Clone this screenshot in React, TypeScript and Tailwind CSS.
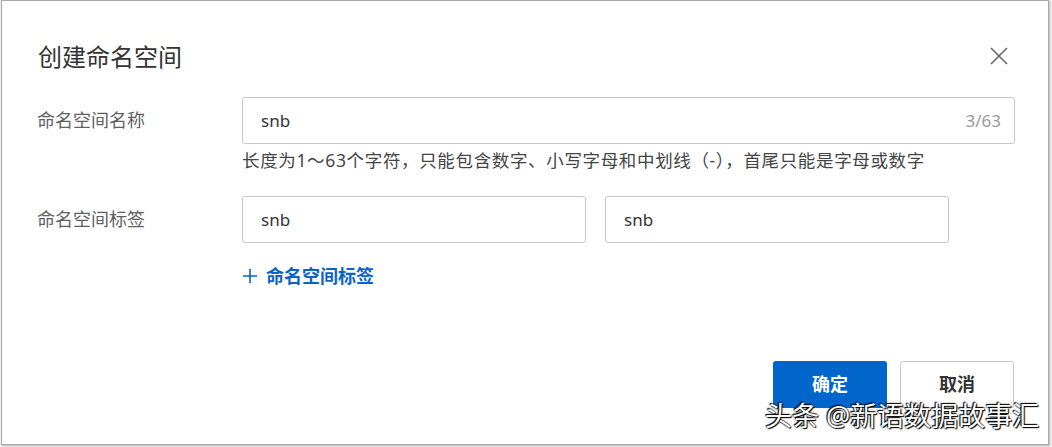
import React from "react"

const FONT = "font-['Noto_Sans','Noto_Sans_CJK_SC',sans-serif]"

function CloseIcon() {
  return (
    <svg width="20" height="20" viewBox="0 0 20 20" fill="none" stroke="#666666" strokeWidth="1.6">
      <path d="M2 2 L18 18 M18 2 L2 18" />
    </svg>
  )
}

function TextBox({ value, counter, className }: { value: string; counter?: string; className?: string }) {
  return (
    <div
      className={`flex h-[47px] items-center justify-between rounded-[3px] border border-[#c9c9c9] bg-white pl-[18px] pr-[13px] text-[17px] text-[#333333] ${className ?? ""}`}
    >
      <span>{value}</span>
      {counter && <span className="text-[17px] text-[#9a9a9a]">{counter}</span>}
    </div>
  )
}

export default function App() {
  return (
    <div className={`relative h-[447px] w-[1052px] overflow-hidden bg-[#f2f2f2] ${FONT}`}>
      <div className="ml-[1px] flex h-[445px] w-[1048px] flex-col border border-[#a9a9a9] bg-white shadow-[1px_1px_2px_rgba(0,0,0,0.25)]">
        {/* header */}
        <div className="mt-[39px] flex h-[34px] items-center justify-between pl-[36px] pr-[37px]">
          <h2 className="text-[24px] leading-[34px] text-[#333333]">创建命名空间</h2>
          <button className="-mt-[3px] mr-[2px]">
            <CloseIcon />
          </button>
        </div>

        {/* form */}
        <div className="mt-[23px] pl-[35px] pr-[33px]">
          <div className="flex items-center">
            <label className="w-[205px] shrink-0 text-[18px] text-[#5f5f5f]">命名空间名称</label>
            <TextBox value="snb" counter="3/63" className="flex-1" />
          </div>
          <p className="ml-[205px] mt-[4px] text-[17.5px] leading-[24px] tracking-[0.65px] text-[#444444]">
            长度为1～63个字符，只能包含数字、小写字母和中划线（-），首尾只能是字母或数字
          </p>

          <div className="mt-[24px] flex items-center">
            <label className="w-[205px] shrink-0 text-[18px] text-[#5f5f5f]">命名空间标签</label>
            <div className="flex gap-[19px]">
              <TextBox value="snb" className="w-[344px]" />
              <TextBox value="snb" className="w-[344px]" />
            </div>
          </div>

          <button className="ml-[205px] mt-[21px] flex items-center gap-[8px] text-[18px] font-bold leading-[24px] text-[#0a64c8]">
            <svg width="16" height="16" viewBox="0 0 16 16" stroke="#0a64c8" strokeWidth="1.6">
              <path d="M8 1 V15 M1 8 H15" />
            </svg>
            命名空间标签
          </button>
        </div>

        {/* footer */}
        <div className="mt-[73px] flex justify-end gap-[13px] pr-[34px]">
          <button className="h-[47px] w-[114px] rounded-[3px] bg-[#0066cc] text-[18px] font-bold text-white">
            确定
          </button>
          <button className="h-[47px] w-[114px] rounded-[3px] border border-[#c9c9c9] bg-white text-[18px] font-bold text-[#333333]">
            取消
          </button>
        </div>
      </div>

      {/* watermark overlay */}
      <div className="absolute left-[765px] top-[398px] text-[27px] leading-[36px] text-white [text-shadow:0_0_2px_#000,1px_1px_1px_#000,-1px_-1px_1px_#000]">
        头条 @新语数据故事汇
      </div>
    </div>
  )
}
